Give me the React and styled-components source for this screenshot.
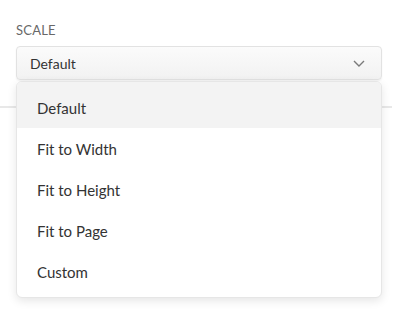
import styled, { createGlobalStyle } from "styled-components";

const GlobalStyle = createGlobalStyle`
  html, body, #root {
    height: 100%;
  }
  body {
    margin: 0;
    background: #fff;
    font-family: Lato, "Liberation Sans", sans-serif;
  }
`;

// Panel that holds the field and the divider below it
const Panel = styled.div`
  position: relative;
  width: 392px;
  min-height: 320px;
  box-sizing: border-box;
  padding-top: 22px;
`;

const Field = styled.div`
  padding: 0 10px 0 16px;
`;

const Label = styled.div`
  font-size: 13px;
  line-height: 16px;
  color: #686868;
  letter-spacing: 0.2px;
  margin-bottom: 8px;
`;

const SelectBox = styled.div`
  display: flex;
  align-items: center;
  justify-content: space-between;
  height: 32px;
  padding: 0 16px 0 13px;
  border: 1px solid #e2e2e2;
  border-radius: 4px;
  background: linear-gradient(#fbfbfb, #f2f2f2);
  box-shadow: 0 1px 2px rgba(0, 0, 0, 0.06);
  font-size: 14px;
  color: #333;
`;

const Divider = styled.div`
  height: 2px;
  background: #e8e8e8;
  margin-top: 26px;
`;

// Dropdown list that lies over the page
const Menu = styled.ul`
  position: absolute;
  top: 81px;
  left: 16px;
  width: 366px;
  box-sizing: border-box;
  margin: 0;
  padding: 0 0 5px;
  list-style: none;
  background: #fff;
  border: 1px solid #e6e6e6;
  border-radius: 6px;
  box-shadow: 0 3px 10px rgba(0, 0, 0, 0.1);
  overflow: hidden;
  z-index: 2;
`;

const Item = styled.li`
  display: flex;
  align-items: center;
  height: 41px;
  padding-left: 20px;
  font-size: 15px;
  color: #333;
  background: ${(p) => (p.$active ? "#f3f3f3" : "transparent")};

  &:first-child {
    height: 46px;
    padding-top: 5px;
    box-sizing: border-box;
  }
`;

const Chevron = () => (
  <svg width="12" height="7" viewBox="0 0 12 7" fill="none">
    <path d="M1 1l5 5 5-5" stroke="#7a7a7a" strokeWidth="1.4" />
  </svg>
);

const options = ["Default", "Fit to Width", "Fit to Height", "Fit to Page", "Custom"];

export default function App() {
  return (
    <>
      <GlobalStyle />
      <Panel>
        <Field>
          <Label>SCALE</Label>
          <SelectBox>
            <span>Default</span>
            <Chevron />
          </SelectBox>
        </Field>
        <Divider />
        <Menu>
          {options.map((o, i) => (
            <Item key={o} $active={i === 0}>
              {o}
            </Item>
          ))}
        </Menu>
      </Panel>
    </>
  );
}
